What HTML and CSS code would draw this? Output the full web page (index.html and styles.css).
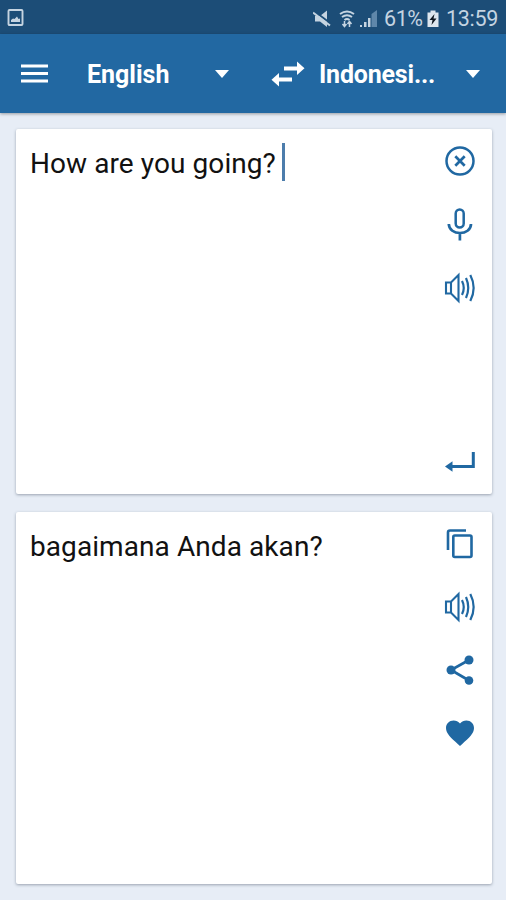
FILE: index.html
```html
<!DOCTYPE html>
<html lang="en">
<head>
<meta charset="utf-8">
<title>Translator</title>
<link rel="stylesheet" href="styles.css">
</head>
<body>
<svg class="defs" width="0" height="0">
  <symbol id="speaker" viewBox="0 0 32 32">
    <path d="M2 10.500H7L14.500 3V29L7 21.500H2ZM7 10.500V21.500" fill="none" stroke="currentColor" stroke-width="2.100"/>
    <path d="M18 9Q21.500 16 18 23M22 6Q26.500 16 22 26M26.300 3Q33 16 26.300 29" fill="none" stroke="currentColor" stroke-width="2.200"/>
  </symbol>
</svg>
<div class="status">
  <svg class="picture" width="18" height="20" viewBox="0 0 18 20"><rect x="1.500" y="2" width="14" height="15" rx="1" fill="none" stroke="currentColor" stroke-width="1.900"/><path d="M4 14V12L6 10.500L7.500 11L10 8.500L11.500 11L13 10.500V14Z" fill="currentColor"/></svg>
  <div class="indicators">
    <svg class="muted" width="18" height="18" viewBox="0 0 18 18"><path d="M2 6H7L14 0.500V17L7 11.500H2Z" fill="currentColor"/><path d="M1 1L17 13" stroke="#1c4d77" stroke-width="2"/><path d="M0 2.500L17 15.500" stroke="currentColor" stroke-width="2"/></svg>
    <svg class="wifi" width="16" height="18" viewBox="0 0 16 18"><path d="M1 4Q8-1 15 4M3 7Q8 3.500 13 7M5.500 10Q8 8 10.500 10" fill="none" stroke="currentColor" stroke-width="2"/><path d="M5.500 11V16M3.500 14L5.500 16.500L7.500 14M10.500 17V12M8.500 14L10.500 11.500L12.500 14" fill="none" stroke="currentColor" stroke-width="1.500"/></svg>
    <svg class="signal" width="18" height="18" viewBox="0 0 18 18"><path d="M0 15H2V17H0ZM4 12H6.500V17H4ZM8 8H10.500V17H8Z" fill="currentColor"/><path d="M11.500 4L17 0V17H11.500Z" fill="#5f87aa"/></svg>
    <span class="percent">61%</span>
    <svg class="battery" width="12" height="18" viewBox="0 0 12 18"><path d="M3.500 0.500H8.500V2.500H11.500V17H0.500V2.500H3.500Z" fill="#dde6ee"/><path d="M7.500 4L2.500 10H5.500L4.500 15L9.500 8.500H6.500Z" fill="#101820"/></svg>
    <span class="clock">13:59</span>
  </div>
</div>
<header class="toolbar">
  <svg class="menu" width="28" height="20" viewBox="0 0 28 20"><path d="M0 2H27M0 9.500H27M0 17H27" stroke="currentColor" stroke-width="3"/></svg>
  <span class="language source">English</span>
  <svg class="arrow" width="14" height="8" viewBox="0 0 14 8"><path d="M0 0H14L7 8Z" fill="currentColor"/></svg>
  <svg class="swap" width="34" height="26" viewBox="0 0 34 26"><path d="M13 5.500H26V0.500L33.500 7.300L26 14V9.500H13ZM21 16.500H8V12L0.500 18.700L8 25.500V20.500H21Z" fill="currentColor"/></svg>
  <span class="language target">Indonesi...</span>
  <svg class="arrow" width="14" height="8" viewBox="0 0 14 8"><path d="M0 0H14L7 8Z" fill="currentColor"/></svg>
</header>
<main class="content">
  <section class="card input">
    <p class="text">How are you going?<span class="caret"></span></p>
    <div class="actions">
      <svg class="icon" viewBox="0 0 32 32"><circle cx="16" cy="16" r="13.500" fill="none" stroke="currentColor" stroke-width="2.500"/><path d="M11.300 11.300L20.700 20.700M20.700 11.300L11.300 20.700" stroke="currentColor" stroke-width="2.700"/></svg>
      <svg class="icon" viewBox="0 0 32 32"><rect x="11.700" y="0.500" width="8" height="18" rx="4" fill="none" stroke="currentColor" stroke-width="2.500"/><path d="M4.800 15C5 27 27 27 27 15M15.900 24V31.500" fill="none" stroke="currentColor" stroke-width="2.700"/></svg>
      <svg class="icon"><use href="#speaker"/></svg>
      <svg class="icon enter" viewBox="0 0 32 32"><path d="M29.300 6V20.500H5" fill="none" stroke="currentColor" stroke-width="3"/><path d="M1 20.500L8.500 15.300V25.700Z" fill="currentColor"/></svg>
    </div>
  </section>
  <section class="card output">
    <p class="text">bagaimana Anda akan?</p>
    <div class="actions">
      <svg class="icon" viewBox="0 0 32 32"><path d="M4 22V4.500Q4 2.500 6 2.500H22" fill="none" stroke="currentColor" stroke-width="2.600"/><rect x="9.300" y="7.500" width="18.200" height="21.500" rx="1.500" fill="none" stroke="currentColor" stroke-width="2.600"/></svg>
      <svg class="icon"><use href="#speaker"/></svg>
      <svg class="icon" viewBox="0 0 32 32"><path d="M25 6L7 16L25 26.500" fill="none" stroke="currentColor" stroke-width="2.700"/><g fill="currentColor"><circle cx="25" cy="6" r="4.500"/><circle cx="7" cy="16" r="4.500"/><circle cx="25" cy="26.500" r="4.300"/></g></svg>
      <svg class="icon" viewBox="0 0 32 32"><path d="M16 29L14 27.200C6.800 20.700 2 16.400 2 11C2 6.800 5.200 3.500 9.600 3.500C12 3.500 14.400 4.700 16 6.500C17.600 4.700 20 3.500 22.400 3.500C26.800 3.500 30 6.800 30 11C30 16.400 25.200 20.700 18 27.200Z" fill="currentColor"/></svg>
    </div>
  </section>
</main>
</body>
</html>
```
FILE: styles.css
```css
* { box-sizing: border-box; }
body {
  margin: 0;
  width: 506px;
  height: 900px;
  overflow: hidden;
  display: flex;
  flex-direction: column;
  background: #e7edf6;
  font-family: Roboto, "Liberation Sans", sans-serif;
}
svg { display: block; flex: none; }
.defs { position: absolute; }
.status {
  flex: none;
  height: 34px;
  padding: 0 7px;
  display: flex;
  align-items: center;
  justify-content: space-between;
  background: #1c4d77;
  color: #c5d4e1;
  font-size: 21.5px;
  line-height: 34px;
}
.picture { margin-top: 2px; }
.indicators { display: flex; align-items: center; height: 36px; padding-top: 3px; }
.wifi { margin-left: 8px; }
.signal { margin-left: 5px; }
.percent { width: 40px; margin-left: 6px; letter-spacing: -0.4px; white-space: nowrap; }
.battery { margin-left: 3px; }
.clock { width: 53px; margin-left: 7px; letter-spacing: -0.3px; white-space: nowrap; }
.toolbar {
  flex: none;
  height: 79px;
  padding: 0 26px 0 21px;
  display: flex;
  align-items: center;
  background: #2268a2;
  color: #fff;
  box-shadow: 0 1px 3px rgba(0, 0, 0, .35);
}
.language { font-size: 25px; font-weight: 700; line-height: 30px; white-space: nowrap; margin-top: 2px; }
.source { width: 128px; margin-left: 38px; }
.swap { margin-left: 42px; }
.target { width: 147px; margin-left: 14px; letter-spacing: -0.2px; }
.content {
  flex: 1;
  padding: 16px 14px 16px 16px;
  display: flex;
  flex-direction: column;
  gap: 18px;
}
.card {
  display: flex;
  justify-content: space-between;
  padding: 16px;
  padding-left: 14px;
  border-radius: 2px;
  background: #fff;
  box-shadow: 0 1px 3px rgba(60, 70, 90, .45);
}
.input { height: 365px; }
.output { height: 372px; }
.text {
  margin: 0;
  display: flex;
  height: 38px;
  font-size: 28px;
  letter-spacing: 0.08px;
  line-height: 38px;
  color: #111;
  white-space: nowrap;
}
.caret { width: 3px; height: 38px; margin: -2px 0 0 6px; background: #4d7dac; }
.actions { display: flex; flex-direction: column; gap: 31px; color: #2068a2; }
.input .actions { gap: 31.5px; }
.icon { width: 32px; height: 32px; overflow: visible; }
.enter { margin-top: auto; }
```
